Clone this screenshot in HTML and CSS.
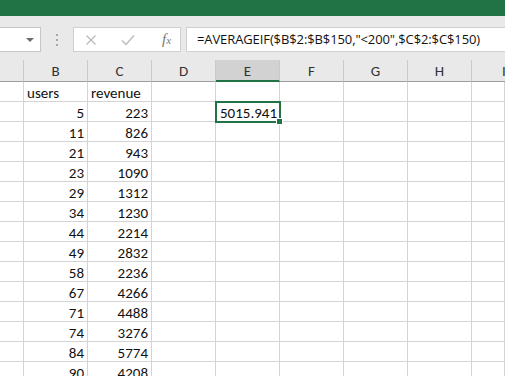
FILE: index.html
```html
<!DOCTYPE html>
<html lang="en">
<head>
    <meta charset="UTF-8">
    <title>Book1 - Excel</title>
    <link rel="stylesheet" href="styles.css">
</head>
<body>

<div class="titlebar"></div>

<!-- Name box + formula bar -->
<div class="toolbar">
    <div class="namebox">
        <span class="arrow"></span>
    </div>
    <div class="grip">
        <span></span><span></span><span></span>
    </div>
    <div class="fx-buttons">
        <svg class="fx-icon" width="12" height="12" viewBox="0 0 12 12">
            <path d="M1.5 1.5 L10.5 10.5 M10.5 1.5 L1.5 10.5" stroke="#bcbcbc" stroke-width="1.4" fill="none"/>
        </svg>
        <svg class="fx-icon" width="14" height="12" viewBox="0 0 14 12">
            <path d="M1 6.5 L5 10.5 L13 1.5" stroke="#bcbcbc" stroke-width="1.4" fill="none"/>
        </svg>
        <span class="fx">f<sub>x</sub></span>
    </div>
    <div class="formula">=AVERAGEIF($B$2:$B$150,"&lt;200",$C$2:$C$150)</div>
</div>

<!-- Sheet -->
<div class="sheet" id="sheet">
    <div class="col-head"></div>
    <div class="col-head">B</div>
    <div class="col-head">C</div>
    <div class="col-head">D</div>
    <div class="col-head selected">E</div>
    <div class="col-head">F</div>
    <div class="col-head">G</div>
    <div class="col-head">H</div>
    <div class="col-head last">I</div>
</div>

<script>
    const data = [
        [5, 223], [11, 826], [21, 943], [23, 1090], [29, 1312], [34, 1230],
        [44, 2214], [49, 2832], [58, 2236], [67, 4266], [71, 4488], [74, 3276],
        [84, 5774], [90, 4208]
    ];

    const sheet = document.getElementById('sheet');

    function addRow(cells) {
        cells.forEach(c => {
            const div = document.createElement('div');
            div.className = 'cell' + (c.cls ? ' ' + c.cls : '');
            div.textContent = c.text || '';
            sheet.appendChild(div);
        });
    }

    function blanks(n) {
        return Array.from({ length: n }, () => ({}));
    }

    // header row
    addRow([{}, { text: 'users', cls: 'text' }, { text: 'revenue', cls: 'text' }].concat(blanks(6)));

    data.forEach((row, i) => {
        const cells = [{}, { text: row[0], cls: 'num' }, { text: row[1], cls: 'num' }, {}];
        if (i === 0) {
            cells.push({ text: '5015.941', cls: 'num active' });
        } else {
            cells.push({});
        }
        addRow(cells.concat(blanks(4)));
    });
</script>

</body>
</html>
```

FILE: styles.css
```css
body {
    margin: 0;
    width: 505px;
    height: 376px;
    overflow: hidden;
    background-color: white;
    font-family: Carlito, Lato, "Liberation Sans", sans-serif;
    color: #111;
}

.titlebar {
    height: 16px;
    background-color: #217346;
}

.toolbar {
    height: 44px;
    background-color: #e9e9e9;
    display: flex;
    align-items: flex-start;
    padding-top: 11px;
    box-sizing: border-box;
}

.namebox {
    width: 41px;
    height: 25px;
    background-color: white;
    border: 1px solid #c6c6c6;
    border-left: none;
    box-sizing: border-box;
    display: flex;
    justify-content: flex-end;
    align-items: center;
    padding-right: 6px;
}

.arrow {
    width: 0;
    height: 0;
    border-left: 4px solid transparent;
    border-right: 4px solid transparent;
    border-top: 4px solid #6d6d6d;
}

.grip {
    width: 32px;
    height: 25px;
    display: flex;
    flex-direction: column;
    align-items: center;
    justify-content: center;
    gap: 3px;
}

.grip span {
    width: 2px;
    height: 2px;
    background-color: #a8a8a8;
}

.fx-buttons {
    width: 108px;
    height: 25px;
    background-color: white;
    border: 1px solid #d0d0d0;
    box-sizing: border-box;
    display: flex;
    align-items: center;
    padding-left: 11px;
    gap: 24px;
}

.fx {
    font-family: "Liberation Serif", serif;
    font-style: italic;
    font-size: 15px;
    color: #777;
    margin-left: 3px;
}

.fx sub {
    font-size: 11px;
    vertical-align: 0;
}

.formula {
    flex: 1;
    height: 25px;
    margin-left: 5px;
    background-color: white;
    border: 1px solid #d0d0d0;
    border-right: none;
    box-sizing: border-box;
    padding-left: 10px;
    font-family: "Open Sans", sans-serif;
    font-size: 13px;
    letter-spacing: -0.1px;
    line-height: 23px;
    color: #111;
    white-space: nowrap;
    overflow: hidden;
}

.sheet {
    display: grid;
    grid-template-columns: 24px repeat(7, 64px) 33px;
    grid-auto-rows: 20px;
    grid-template-rows: 22px;
}

.col-head {
    background-color: #e9e9e9;
    border-right: 1px solid #c9c9c9;
    border-bottom: 1px solid #9e9e9e;
    box-sizing: border-box;
    text-align: center;
    font-size: 15px;
    line-height: 22px;
    color: #333;
}

.col-head.selected {
    background-color: #d2d2d2;
    border-bottom: 2px solid #217346;
}

.col-head.last {
    text-align: left;
    padding-left: 30px;
    border-right: none;
    overflow: hidden;
}

.cell {
    border-right: 1px solid #d4d4d4;
    border-bottom: 1px solid #d4d4d4;
    box-sizing: border-box;
    font-size: 15px;
    line-height: 22px;
    padding: 0 3px;
    white-space: nowrap;
    position: relative;
}

.num {
    text-align: right;
}

.active {
    outline: 2px solid #217346;
    outline-offset: -1px;
    padding-right: 2px;
    z-index: 1;
}

.active::after {
    content: "";
    position: absolute;
    right: -4px;
    bottom: -4px;
    width: 5px;
    height: 5px;
    background-color: #217346;
    border: 1px solid white;
}
```
